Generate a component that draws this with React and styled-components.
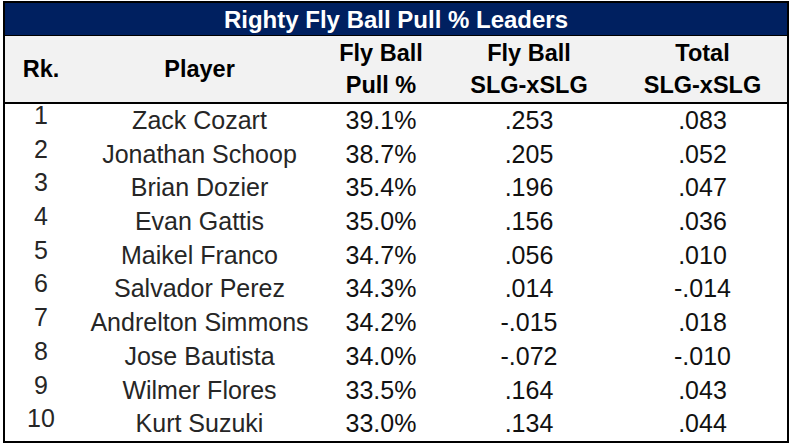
import styled, { createGlobalStyle } from 'styled-components';

const GlobalStyle = createGlobalStyle`
  body {
    margin: 0;
    background: #ffffff;
    font-family: "Liberation Sans", Arial, sans-serif;
  }
`;

const Page = styled.div`
  padding: 1px 0 0 3px;
`;

const Table = styled.div`
  width: 786px;
  border: 2px solid #000;
  box-sizing: border-box;
  background: #fff;
`;

const Title = styled.div`
  height: 32px;
  background: #002060;
  color: #fff;
  font-weight: bold;
  font-size: 24px;
  line-height: 33px;
  text-align: center;
  border-bottom: 1px solid #000;
`;

const Grid = styled.div`
  display: grid;
  grid-template-columns: 72px 245px 118px 178px 1fr;
  align-items: center;
`;

const HeadRow = styled(Grid)`
  height: 66px;
  background: #f2f2f2;
  border-bottom: 2px solid #000;
  color: #000;
  font-weight: bold;
  font-size: 23.5px;
  line-height: 32px;
  text-align: center;
`;

const Row = styled(Grid)`
  height: 33.7px;
  font-size: 25px;
  line-height: 33.7px;
  text-align: center;
`;

const Cell = styled.div`
  white-space: nowrap;
  color: ${(p) => (p.$num ? '#111' : '#262626')};
`;

const RankCell = styled.div`
  align-self: start;
  line-height: 22px;
  color: #262626;
`;

const rows = [
  [1, 'Zack Cozart', '39.1%', '.253', '.083'],
  [2, 'Jonathan Schoop', '38.7%', '.205', '.052'],
  [3, 'Brian Dozier', '35.4%', '.196', '.047'],
  [4, 'Evan Gattis', '35.0%', '.156', '.036'],
  [5, 'Maikel Franco', '34.7%', '.056', '.010'],
  [6, 'Salvador Perez', '34.3%', '.014', '-.014'],
  [7, 'Andrelton Simmons', '34.2%', '-.015', '.018'],
  [8, 'Jose Bautista', '34.0%', '-.072', '-.010'],
  [9, 'Wilmer Flores', '33.5%', '.164', '.043'],
  [10, 'Kurt Suzuki', '33.0%', '.134', '.044'],
];

const App = () => {
  return (
    <Page>
      <GlobalStyle />
      <Table>
        <Title>Righty Fly Ball Pull % Leaders</Title>
        <HeadRow>
          <div>Rk.</div>
          <div>Player</div>
          <div>Fly Ball<br />Pull %</div>
          <div>Fly Ball<br />SLG-xSLG</div>
          <div>Total<br />SLG-xSLG</div>
        </HeadRow>
        {rows.map((r) => (
          <Row key={r[0]}>
            <RankCell>{r[0]}</RankCell>
            <Cell>{r[1]}</Cell>
            <Cell $num>{r[2]}</Cell>
            <Cell $num>{r[3]}</Cell>
            <Cell $num>{r[4]}</Cell>
          </Row>
        ))}
      </Table>
    </Page>
  );
};

export default App;
